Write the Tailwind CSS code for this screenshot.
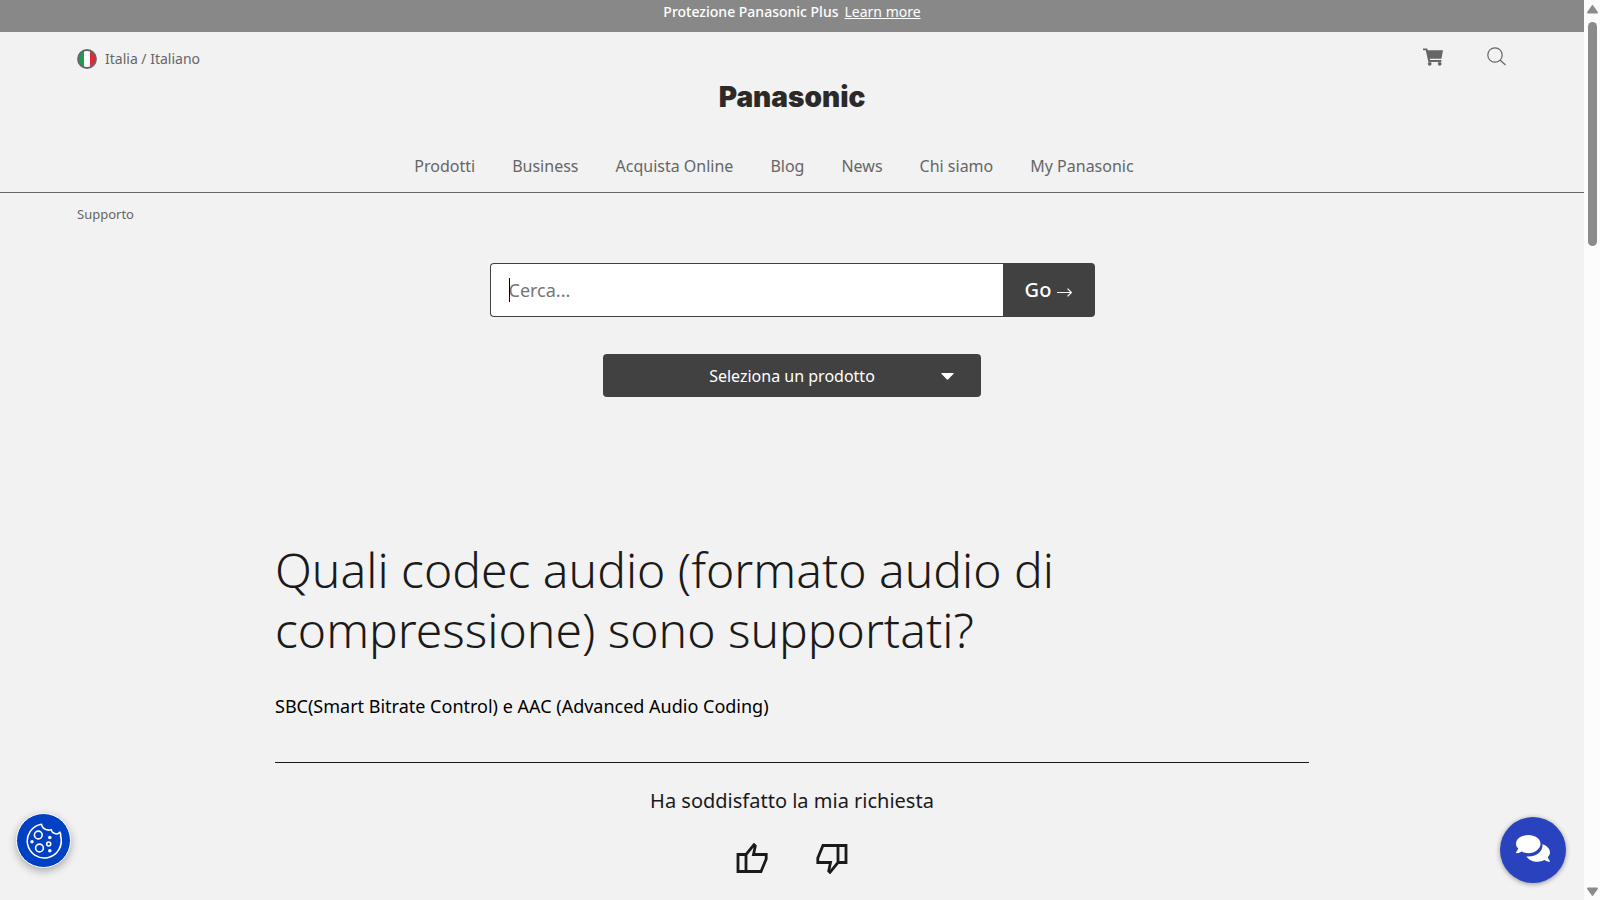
<!DOCTYPE html>
<html lang="it">
<head>
<meta charset="utf-8">
<meta name="viewport" content="width=device-width, initial-scale=1">
<title>Supporto - Panasonic Italia</title>
<script src="https://cdn.jsdelivr.net/npm/@tailwindcss/browser@4"></script>
</head>
<body class="h-screen overflow-hidden bg-[#f2f2f2] pr-4 font-['Noto_Sans',sans-serif] text-[#1a1a1a]">

<div class="flex h-8 justify-center gap-1.5 bg-[#888] pt-0.5 text-sm text-white">
  <p class="font-medium">Protezione Panasonic Plus</p>
  <a href="#" class="underline">Learn more</a>
</div>

<header class="border-b border-[#666] text-[#666]">
  <div class="flex h-[53px] items-center justify-between pr-[78px] pl-[77px]">
    <a href="#" class="flex items-center gap-2 text-sm">
      <svg class="size-5" viewBox="0 0 20 20" aria-hidden="true">
        <clipPath id="flag"><circle cx="10" cy="10" r="9"/></clipPath>
        <g clip-path="url(#flag)"><path fill="#fff" d="M0 0h20v20H0z"/><path fill="#1f9a55" d="M0 0h7v20H0z"/><path fill="#d92e3a" d="M13 0h7v20h-7z"/></g>
        <circle cx="10" cy="10" r="9" fill="none" stroke="#666" stroke-width="1.8"/>
      </svg>
      Italia / Italiano
    </a>
    <div class="flex items-center gap-11 pb-1">
      <a href="#" aria-label="Carrello">
        <svg class="h-[18px] w-5" viewBox="0 0 20 18" fill="#666"><path d="M0 .5h4.200l.5 1.800H20l-1.600 8.400H6.800l.3 1.300h11.200v2H5.400L2.700 2.300H0z"/><circle cx="6.700" cy="15.800" r="1.900"/><circle cx="16.700" cy="15.800" r="1.900"/></svg>
      </a>
      <button type="button" aria-label="Cerca nel sito">
        <svg class="size-[19px]" viewBox="0 0 19 19" fill="none" stroke="#666" stroke-width="1.200"><circle cx="8" cy="8" r="7.200"/><path d="m13 13 5.500 5"/></svg>
      </button>
    </div>
  </div>
  <a href="#" class="mx-auto block w-fit font-['Inter',sans-serif] text-[28px]/6 font-black text-[#2b2a28]">Panasonic</a>
  <nav class="flex h-[83px] justify-center gap-[37px] pt-[45px] pr-9 text-base whitespace-nowrap">
    <a href="#">Prodotti</a>
    <a href="#">Business</a>
    <a href="#">Acquista Online</a>
    <a href="#">Blog</a>
    <a href="#">News</a>
    <a href="#">Chi siamo</a>
    <a href="#">My Panasonic</a>
  </nav>
</header>

<nav class="px-[77px] pt-[11px] text-[13px]/5 text-[#666]" aria-label="Percorso"><a href="#">Supporto</a></nav>

<main>
  <form class="mx-auto mt-[39px] flex h-[54px] max-w-[605px] rounded">
    <div class="relative flex min-w-0 flex-1 rounded-l border border-r-0 border-[#414141] bg-white">
      <input type="search" aria-label="Cerca" placeholder="Cerca..." class="w-full min-w-0 px-[18px] text-lg outline-none placeholder:text-[#757575]">
      <span class="absolute top-3.5 left-[18px] h-6 w-px bg-black"></span>
    </div>
    <button type="submit" class="flex w-[92px] items-center justify-center gap-1.5 rounded-r bg-[#414141] text-xl font-medium text-white">
      Go
      <svg class="mt-1 h-[9px] w-[15px]" viewBox="0 0 15 9" fill="none" stroke="currentColor" stroke-width="1.100"><path d="M0 4.500h14.300M10.500.6l3.900 3.900-3.900 3.900"/></svg>
    </button>
  </form>

  <button type="button" class="relative mx-auto mt-[37px] block h-[43px] w-full max-w-[378px] rounded bg-[#414141] text-base text-white">
    Seleziona un prodotto
    <svg class="absolute top-[19px] right-[27px] h-[7px] w-[13px]" viewBox="0 0 13 7" fill="#fff"><path d="M.8 0h11.400q1.200 0 .2 1L7.300 6.300q-.8.800-1.600 0L.6 1Q-.4 0 .8 0z"/></svg>
  </button>

  <div class="mx-auto mt-[143px] max-w-[1034px]">
    <h1 class="max-w-[860px] text-5xl/[60px] font-light">Quali codec audio (formato audio di compressione) sono supportati?</h1>
    <p class="mt-8 text-lg/7 text-black">SBC(Smart Bitrate Control) e AAC (Advanced Audio Coding)</p>
    <hr class="mt-[42px] border-[#1a1a1a]">
    <p class="mt-6 text-center text-xl/7">Ha soddisfatto la mia richiesta</p>
    <div class="mt-7 flex justify-center gap-12">
      <button type="button" aria-label="Mi piace">
        <svg class="h-[31px] w-8" viewBox="0 0 32 31" fill="none" stroke="#1a1a1a" stroke-width="2.800"><path d="M2 11.500h8v17H2zM10 28.500h15l5.200-12.500v-4.500H17.500l1.800-8.500L18 1.700l-8 9.800z"/></svg>
      </button>
      <button type="button" aria-label="Non mi piace">
        <svg class="h-[31px] w-8 rotate-180" viewBox="0 0 32 31" fill="none" stroke="#1a1a1a" stroke-width="2.800"><path d="M2 11.500h8v17H2zM10 28.500h15l5.200-12.500v-4.500H17.500l1.800-8.500L18 1.700l-8 9.800z"/></svg>
      </button>
    </div>
  </div>
</main>

<button type="button" aria-label="Impostazioni dei cookie" class="fixed bottom-8 left-4 flex size-[55px] items-center justify-center rounded-full border border-white bg-[#0041c4] shadow-[0_3px_8px_rgba(0,0,0,0.3)]">
  <svg class="size-9" viewBox="0 0 36 36" fill="none" stroke="#fff" stroke-width="1.600"><path d="M15.500 1.200A17 17 0 1 0 34.600 13.200Q35 10.500 33.900 9.200Q31 12.500 27 9.700Q25.500 8 25.400 6.700Q20.500 8 17.500 5.200Q15.800 3.500 15.500 1.200z" stroke-linejoin="round"/><circle cx="12.300" cy="12" r="3.900"/><circle cx="13.500" cy="25" r="3.900"/><circle cx="22.700" cy="21" r="2" /><g fill="#fff" stroke="none"><circle cx="23.800" cy="14.500" r="1.800"/><circle cx="6" cy="18.700" r="1.700"/><circle cx="23.800" cy="27.700" r="1.800"/></g></svg>
</button>

<button type="button" aria-label="Apri chat" class="fixed right-[34px] bottom-[17px] flex size-[66px] items-center justify-center rounded-full bg-[#2942bd] shadow-[0_1px_5px_rgba(0,0,0,0.4)]">
  <svg class="mb-1 h-[27px] w-[34px]" viewBox="0 0 576 400" fill="#fff" preserveAspectRatio="none"><path d="M416 128C416 57.300 322.900 0 208 0S0 57.300 0 128c0 27.400 14.100 52.700 38 73.500C24.600 231.700 2.800 255.400 2.500 255.700c-2.200 2.300-2.800 5.700-1.500 8.700S4.800 269 8 269c36.600 0 66.900-12.300 88.700-25C128.900 259.500 167 269 208 269c114.900 0 208-70.300 208-141zM538 329.500c23.900-20.700 38-46.100 38-73.500 0-53.500-53.500-99.300-129.300-118.500.9 7.400 1.300 14.900 1.300 22.500 0 88.200-107.700 160-240 160-10.800 0-21.300-.6-31.700-1.600C207.800 362.900 281.800 397 368 397c41 0 79.100-9.500 111.300-25 21.800 12.700 52.100 25 88.700 25 3.200 0 6.100-1.900 7.300-4.800 1.300-2.900.7-6.300-1.500-8.700-.3-.3-22.200-23.900-35.800-54z"/></svg>
</button>

<div class="fixed inset-y-0 right-0 flex w-4 flex-col items-center justify-between bg-[#fcfcfc] pt-[5px] pb-1" aria-hidden="true">
  <div class="flex flex-col items-center gap-2">
    <svg class="ml-px h-[9px] w-[11px]" viewBox="0 0 11 9" fill="#8b8b8b"><path d="M4.800.5q.7-.9 1.400 0L10.800 7q.5 1.500-.8 1.500H1Q-.3 8.500.2 7z"/></svg>
    <div class="h-[224px] w-[9px] rounded-full bg-[#8b8b8b]"></div>
  </div>
  <svg class="ml-px h-[9px] w-[11px] rotate-180" viewBox="0 0 11 9" fill="#8b8b8b"><path d="M4.800.5q.7-.9 1.400 0L10.800 7q.5 1.500-.8 1.500H1Q-.3 8.500.2 7z"/></svg>
</div>
</body>
</html>
